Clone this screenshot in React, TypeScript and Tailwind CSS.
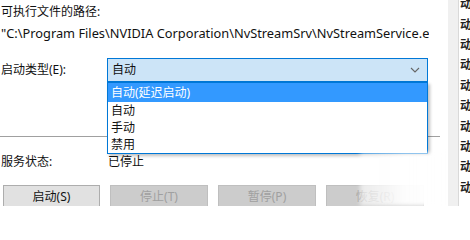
import React from 'react';

const cjk = '"Noto Sans", "Noto Sans CJK SC", sans-serif';

const rows = ['动', '动', '动(', '动', '动', '动(', '动', '动', '动', '动'];

function Btn({ label, enabled }: { label: string; enabled?: boolean }) {
  return (
    <div
      className={
        enabled
          ? 'w-[97px] h-[24px] flex items-center justify-center border border-[#adadad] bg-[#e1e1e1] text-[#111]'
          : 'w-[98px] h-[24px] flex items-center justify-center border border-[#bfbfbf] bg-[#cccccc] text-[#a0a0a0]'
      }
    >
      {label}
    </div>
  );
}

export default function App() {
  return (
    <div className="w-[470px] h-[206px] overflow-hidden bg-white flex text-[12px] leading-none" style={{ fontFamily: cjk }}>
      {/* 属性对话框 */}
      <div className="relative w-[448px] shrink-0 overflow-hidden">
        <div className="pl-[1px] pt-[6px] h-[20px] text-[#111]">可执行文件的路径:</div>
        <div className="w-[429px] overflow-hidden pl-[1px] pt-[5px] h-[22px] leading-[17px] whitespace-nowrap text-[#111] text-[12.8px]">
          "C:\Program Files\NVIDIA Corporation\NvStreamSrv\NvStreamService.exe"
        </div>

        <div className="mt-[16px] flex items-center h-[24px]">
          <div className="w-[107px] pl-[1px] text-[#111]">启动类型(E):</div>
          <div className="w-[321px] h-[24px] border border-[#0078d7] bg-[#cce4f7] flex items-center justify-between px-[4px] text-[#111]">
            <span>自动</span>
            <svg width="10" height="6" viewBox="0 0 10 6" className="mr-[3px]">
              <path d="M1 1 L5 5 L9 1" fill="none" stroke="#666" strokeWidth="1.1" />
            </svg>
          </div>
        </div>

        <div className="mt-[54px] h-px w-[440px] bg-[#a0a0a0]" />

        <div className="mt-[19px] flex items-center text-[#111]">
          <div className="w-[108px] pl-[1px]">服务状态:</div>
          <div>已停止</div>
        </div>

        <div className="mt-[17px] flex gap-[10px] pl-[3px]">
          <Btn label="启动(S)" enabled />
          <Btn label="停止(T)" />
          <Btn label="暂停(P)" />
          <Btn label="恢复(R)" />
        </div>

        {/* 下拉列表 */}
        <div className="absolute left-[107px] top-[82px] w-[321px] h-[72px] border border-[#0078d7] bg-white flex flex-col shadow-[2px_2px_3px_rgba(0,0,0,0.25)]">
          <div className="h-[19px] bg-[#3399ff] text-white flex items-center px-[3px]">自动(延迟启动)</div>
          <div className="h-[17px] flex items-center px-[3px] text-[#111]">自动</div>
          <div className="h-[17px] flex items-center px-[3px] text-[#111]">手动</div>
          <div className="h-[17px] flex items-center px-[3px] text-[#111]">禁用</div>
        </div>

        {/* 模糊遮挡 */}
        <div className="absolute left-[360px] top-[153px] w-[90px] h-[53px] bg-gradient-to-r from-white/60 via-white/95 to-white blur-[2px]" />
      </div>

      {/* 背后的服务列表 */}
      <div className="w-[11px] shrink-0 bg-[#f0f0f0] border-r border-[#d9d9d9]" />
      <div className="flex-1 flex flex-col -mt-[6px] pl-[1px] overflow-hidden">
        {rows.map((r, i) => (
          <div key={i} className="h-[20.4px] shrink-0 flex items-center whitespace-nowrap text-[#222] font-semibold">
            {r}
          </div>
        ))}
      </div>
    </div>
  );
}
